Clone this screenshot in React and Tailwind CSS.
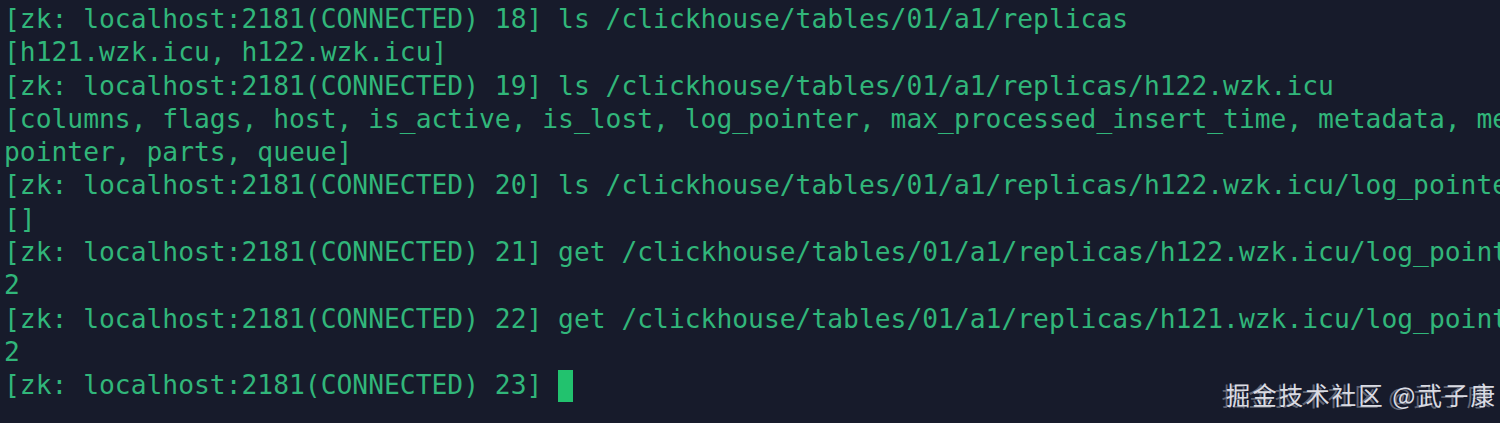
import React from 'react';

const lines = [
  '[zk: localhost:2181(CONNECTED) 18] ls /clickhouse/tables/01/a1/replicas',
  '[h121.wzk.icu, h122.wzk.icu]',
  '[zk: localhost:2181(CONNECTED) 19] ls /clickhouse/tables/01/a1/replicas/h122.wzk.icu',
  '[columns, flags, host, is_active, is_lost, log_pointer, max_processed_insert_time, metadata, metadata_version, min_unprocessed_insert_time, mutation_',
  'pointer, parts, queue]',
  '[zk: localhost:2181(CONNECTED) 20] ls /clickhouse/tables/01/a1/replicas/h122.wzk.icu/log_pointer',
  '[]',
  '[zk: localhost:2181(CONNECTED) 21] get /clickhouse/tables/01/a1/replicas/h122.wzk.icu/log_pointer',
  '2',
  '[zk: localhost:2181(CONNECTED) 22] get /clickhouse/tables/01/a1/replicas/h121.wzk.icu/log_pointer',
  '2',
];

const App = () => {
  return (
    <div className="relative w-[1500px] h-[423px] overflow-hidden bg-[#171b2b]">
      <div className="pl-[4px] pt-[3px] text-[#31b67a] text-[26.3px] leading-[33.3px] font-['DejaVu_Sans_Mono',monospace] whitespace-pre">
        {lines.map((l, i) => (
          <div key={i} className="h-[33.3px] overflow-hidden">{l}</div>
        ))}
        <div className="h-[33.3px] flex items-center">
          <span>[zk: localhost:2181(CONNECTED) 23] </span>
          <span className="inline-block w-[15px] h-[32px] bg-[#22c26e]" />
        </div>
      </div>

      <div className="absolute right-[3px] bottom-[16px] text-[#dadbe3] text-[24.5px] tracking-[2px] leading-none font-['Noto_Sans_CJK_SC',sans-serif] whitespace-pre">
        掘金技术社区 @武子康
        <span className="absolute left-[-4px] top-[1px] text-[#dadbe3]/40">
          掘金技术社区 @武子康
        </span>
      </div>
    </div>
  );
};

export default App;
